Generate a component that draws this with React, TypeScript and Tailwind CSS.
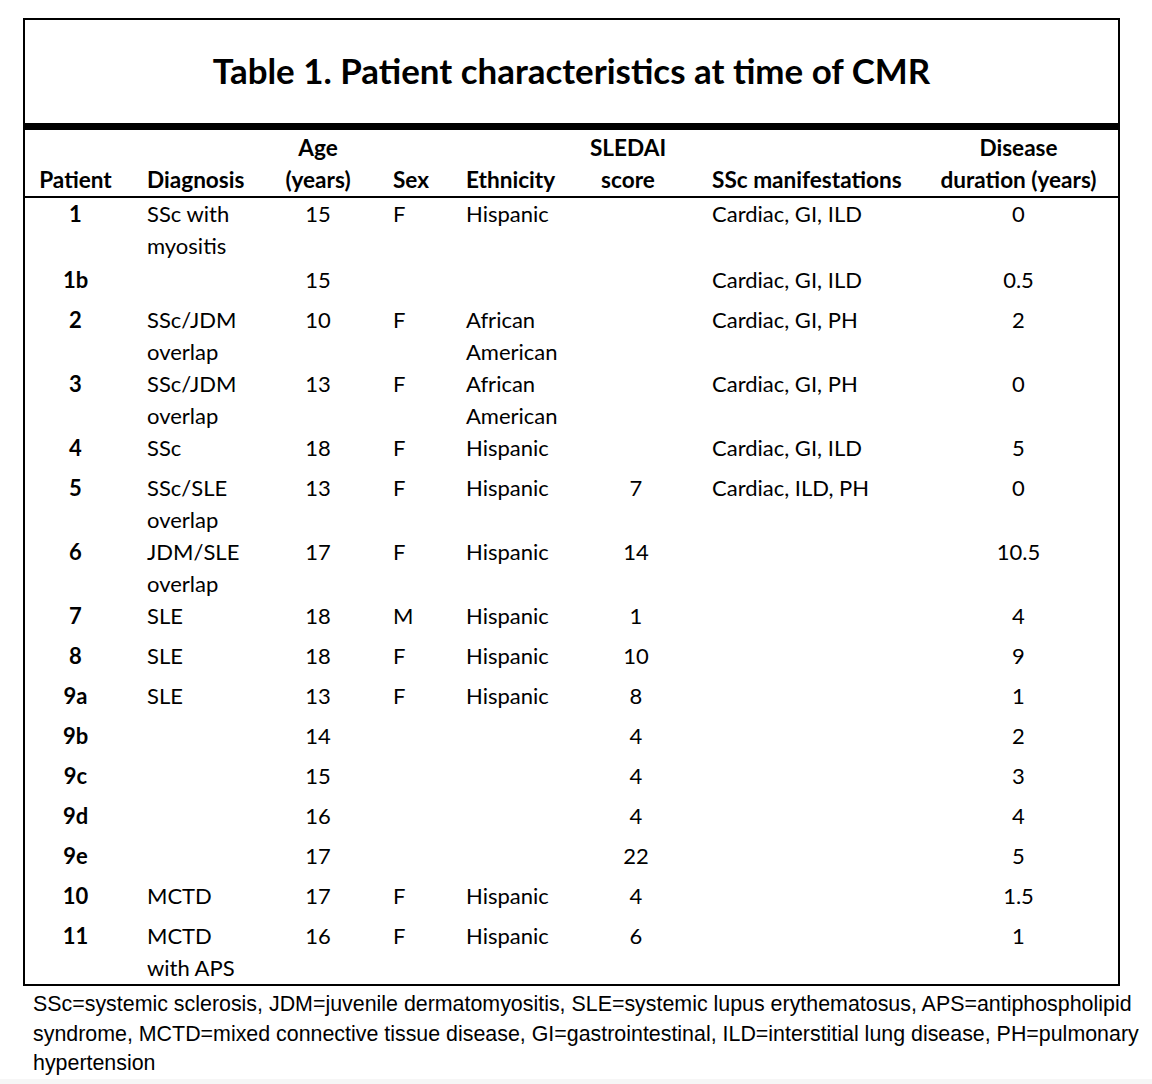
import React from "react";

type Row = {
  id: string;
  dx?: string;
  age: string;
  sex?: string;
  eth?: string;
  sledai?: string;
  ssc?: string;
  dur: string;
  first?: boolean;
};

const rows: Row[] = [
  { id: "1", dx: "SSc with myositis", age: "15", sex: "F", eth: "Hispanic", ssc: "Cardiac, GI, ILD", dur: "0", first: true },
  { id: "1b", age: "15", ssc: "Cardiac, GI, ILD", dur: "0.5" },
  { id: "2", dx: "SSc/JDM overlap", age: "10", sex: "F", eth: "African American", ssc: "Cardiac, GI, PH", dur: "2" },
  { id: "3", dx: "SSc/JDM overlap", age: "13", sex: "F", eth: "African American", ssc: "Cardiac, GI, PH", dur: "0" },
  { id: "4", dx: "SSc", age: "18", sex: "F", eth: "Hispanic", ssc: "Cardiac, GI, ILD", dur: "5" },
  { id: "5", dx: "SSc/SLE overlap", age: "13", sex: "F", eth: "Hispanic", sledai: "7", ssc: "Cardiac, ILD, PH", dur: "0" },
  { id: "6", dx: "JDM/SLE overlap", age: "17", sex: "F", eth: "Hispanic", sledai: "14", dur: "10.5" },
  { id: "7", dx: "SLE", age: "18", sex: "M", eth: "Hispanic", sledai: "1", dur: "4" },
  { id: "8", dx: "SLE", age: "18", sex: "F", eth: "Hispanic", sledai: "10", dur: "9" },
  { id: "9a", dx: "SLE", age: "13", sex: "F", eth: "Hispanic", sledai: "8", dur: "1" },
  { id: "9b", age: "14", sledai: "4", dur: "2" },
  { id: "9c", age: "15", sledai: "4", dur: "3" },
  { id: "9d", age: "16", sledai: "4", dur: "4" },
  { id: "9e", age: "17", sledai: "22", dur: "5" },
  { id: "10", dx: "MCTD", age: "17", sex: "F", eth: "Hispanic", sledai: "4", dur: "1.5" },
  { id: "11", dx: "MCTD with APS", age: "16", sex: "F", eth: "Hispanic", sledai: "6", dur: "1" },
];

const cols = "grid grid-cols-[101px_146px_92px_86px_130px_104px_246px_177px]";

export default function App() {
  return (
    <div className="w-[1152px] h-[1084px] bg-white text-black flex flex-col">
      <div className="ml-[23px] mt-[18px] w-[1097px] border-2 border-black font-['Lato',sans-serif]">
        {/* title */}
        <div className="h-[103px] flex items-center justify-center">
          <h1 className="text-[34.9px] font-bold leading-none">
            Table 1. Patient characteristics at time of CMR
          </h1>
        </div>
        <div className="h-[7px] bg-black" />

        {/* header */}
        <div className={`${cols} pt-[2px] border-b-2 border-black text-[22.6px] font-bold leading-[32px]`}>
          <div className="flex items-end justify-center">Patient</div>
          <div className="flex items-end pl-[21px]">Diagnosis</div>
          <div className="text-center">
            Age
            <br />
            (years)
          </div>
          <div className="flex items-end pl-[29px]">Sex</div>
          <div className="flex items-end pl-[16px]">Ethnicity</div>
          <div className="text-center pr-[8px]">
            SLEDAI
            <br />
            score
          </div>
          <div className="flex items-end pl-[28px]">SSc manifestations</div>
          <div className="text-center whitespace-nowrap">
            Disease
            <br />
            duration (years)
          </div>
        </div>

        {/* body */}
        <div className="text-[22px] leading-[32px]">
          {rows.map((r) => (
            <div key={r.id} className={`${cols} min-h-[40px] ${r.first ? "pb-[2px]" : ""}`}>
              <div className="text-center font-bold">{r.id}</div>
              <div className="pl-[21px] pr-[24px]">{r.dx}</div>
              <div className="text-center">{r.age}</div>
              <div className="pl-[29px]">{r.sex}</div>
              <div className="pl-[16px] pr-[14px]">{r.eth}</div>
              <div className="text-center pl-[8px]">{r.sledai}</div>
              <div className="pl-[28px]">{r.ssc}</div>
              <div className="text-center">{r.dur}</div>
            </div>
          ))}
        </div>
      </div>

      {/* footnote */}
      <p className="ml-[33px] mt-[4px] w-[1112px] font-['Liberation_Sans',Arial,sans-serif] text-[21.4px] leading-[29.5px]">
        SSc=systemic sclerosis, JDM=juvenile dermatomyositis, SLE=systemic lupus erythematosus,
        APS=antiphospholipid syndrome, MCTD=mixed connective tissue disease, GI=gastrointestinal,
        ILD=interstitial lung disease, PH=pulmonary hypertension
      </p>
      <div className="mt-auto h-[10px] bg-[#f6f6f6]" />
    </div>
  );
}
